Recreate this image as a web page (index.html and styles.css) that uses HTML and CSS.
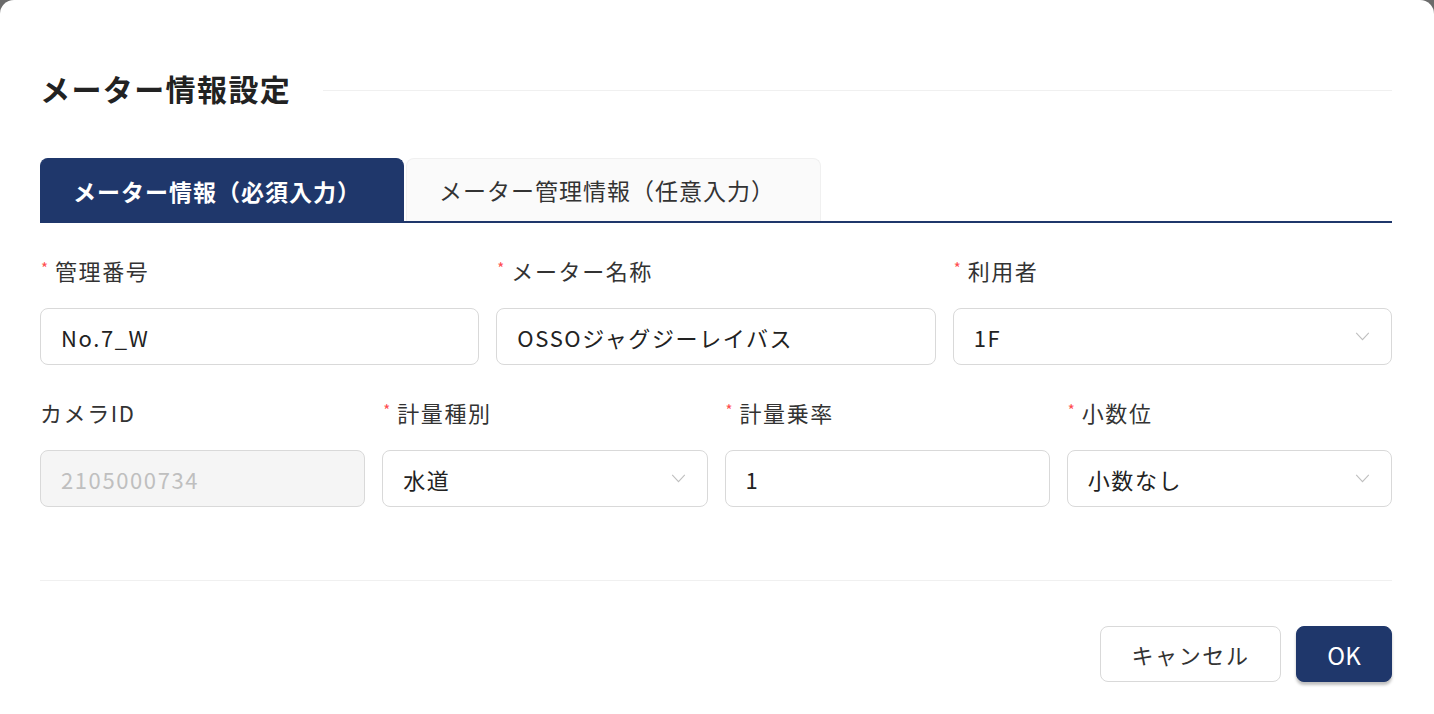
FILE: index.html
```html
<!DOCTYPE html>
<html lang="ja">
<head>
<meta charset="utf-8">
<link rel="stylesheet" href="styles.css">
</head>
<body>
<div class="modal">
  <div class="title-row">
    <h1 class="title">メーター情報設定</h1>
    <div class="title-line"></div>
  </div>
  <div class="tabs">
    <div class="tab active">メーター情報（必須入力）</div>
    <div class="tab">メーター管理情報（任意入力）</div>
  </div>
  <div class="row row3">
    <div class="field">
      <div class="label"><span class="req">*</span>管理番号</div>
      <div class="input">No.7_W</div>
    </div>
    <div class="field">
      <div class="label"><span class="req">*</span>メーター名称</div>
      <div class="input">OSSOジャグジーレイバス</div>
    </div>
    <div class="field">
      <div class="label"><span class="req">*</span>利用者</div>
      <div class="input select">1F<svg class="chev" viewBox="0 0 16 10" width="15" height="9"><path d="M1 1 L8 8.5 L15 1" fill="none" stroke="#bfbfbf" stroke-width="1.2"/></svg></div>
    </div>
  </div>
  <div class="row row4">
    <div class="field">
      <div class="label">カメラID</div>
      <div class="input disabled">2105000734</div>
    </div>
    <div class="field">
      <div class="label"><span class="req">*</span>計量種別</div>
      <div class="input select">水道<svg class="chev" viewBox="0 0 16 10" width="15" height="9"><path d="M1 1 L8 8.5 L15 1" fill="none" stroke="#bfbfbf" stroke-width="1.2"/></svg></div>
    </div>
    <div class="field">
      <div class="label"><span class="req">*</span>計量乗率</div>
      <div class="input">1</div>
    </div>
    <div class="field">
      <div class="label"><span class="req">*</span>小数位</div>
      <div class="input select">小数なし<svg class="chev" viewBox="0 0 16 10" width="15" height="9"><path d="M1 1 L8 8.5 L15 1" fill="none" stroke="#bfbfbf" stroke-width="1.2"/></svg></div>
    </div>
  </div>
  <div class="divider"></div>
  <div class="footer">
    <button class="btn cancel">キャンセル</button>
    <button class="btn ok">OK</button>
  </div>
</div>
</body>
</html>
```
FILE: styles.css
```css
* { box-sizing: border-box; }
html, body { margin: 0; padding: 0; }
body {
  background: #6b6b6b;
  font-family: "Noto Sans CJK JP", "Noto Sans", sans-serif;
  color: #2b2b2b;
}
.modal {
  width: 1434px;
  height: 714px;
  background: #fff;
  border-radius: 14px 14px 0 0;
  padding: 70px 42px 0 40px;
}
.title-row {
  display: flex;
  align-items: center;
  height: 36px;
}
.title {
  margin: 0;
  font-size: 30px;
  letter-spacing: 1.4px;
  font-weight: 700;
  line-height: 36px;
  color: #222;
  white-space: nowrap;
}
.title-line {
  flex: 1;
  margin-left: 32px;
  margin-top: 4px;
  border-top: 1px solid #f0f0f0;
}
.tabs {
  margin-top: 52px;
  display: flex;
  gap: 2px;
  border-bottom: 2px solid #1f376b;
  height: 65px;
}
.tab {
  height: 63px;
  padding: 0 0 0 32px;
  display: flex;
  align-items: center;
  font-size: 23px;
  letter-spacing: 1px;
  color: #333;
  background: #fafafa;
  border: 1px solid #f0f0f0;
  border-bottom: none;
  border-radius: 8px 8px 0 0;
  white-space: nowrap;
}
.tab.active {
  background: #1f376b;
  border-color: #1f376b;
  color: #fff;
  font-weight: 700;
  width: 364px;
  height: 64px;
  padding: 0 0 0 32px;
}
.tab:not(.active) { width: 415px; }
.row {
  display: grid;
  column-gap: 17px;
}
.row3 { grid-template-columns: repeat(3, 1fr); margin-top: 33px; }
.row4 { grid-template-columns: repeat(4, 1fr); margin-top: 33px; }
.label {
  font-size: 22px;
  letter-spacing: 1.6px;
  line-height: 28px;
  color: #333;
  margin-bottom: 24px;
  display: flex;
  align-items: center;
}
.req {
  color: #ff4d4f;
  font-size: 15px;
  margin-right: 7px;
  margin-left: 1px;
  align-self: flex-start;
  line-height: 24px;
  letter-spacing: 0;
}
.input {
  height: 57px;
  border: 1px solid #d9d9d9;
  border-radius: 8px;
  padding: 0 20px;
  display: flex;
  align-items: center;
  font-size: 22px;
  letter-spacing: 1.6px;
  color: #222;
  background: #fff;
}
.input.select { justify-content: space-between; padding-right: 21px; }
.input.disabled { background: #f5f5f5; color: #bfbfbf; }
.chev { flex: none; }
.divider {
  margin-top: 73px;
  border-top: 1px solid #f0f0f0;
}
.footer {
  display: flex;
  justify-content: flex-end;
  gap: 15px;
  margin-top: 45px;
}
.btn {
  height: 56px;
  border-radius: 8px;
  font-family: inherit;
  font-size: 22px;
  letter-spacing: 1.6px;
  padding: 0;
  cursor: pointer;
}
.cancel {
  width: 181px;
  background: #fff;
  border: 1px solid #d9d9d9;
  color: #333;
}
.ok {
  width: 96px;
  background: #1f376b;
  border: 1px solid #1f376b;
  color: #fff;
  font-size: 24px;
  letter-spacing: 0;
  box-shadow: 0 3px 3px rgba(0,0,0,0.25);
}
```
